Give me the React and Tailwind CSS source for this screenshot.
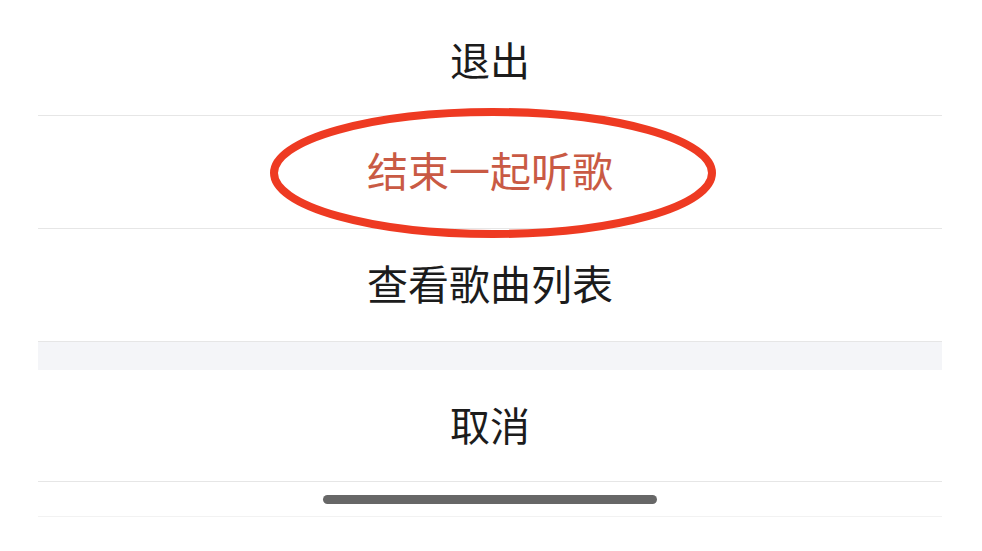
import React from "react";

const font = { fontFamily: '"Noto Sans CJK SC", "Noto Sans", sans-serif' };

function Row({ children, className = "" }) {
  return (
    <div className={`flex items-center justify-center h-[113px] pb-[6px] border-b border-[#e6e6e6] ${className}`}>
      {children}
    </div>
  );
}

export default function App() {
  return (
    <div className="w-[982px] h-[551px] bg-white overflow-hidden" style={font}>
      <div className="relative mx-[38px] w-[904px]">
        <div className="flex items-center justify-center h-[116px] pt-[2px] border-b border-[#e6e6e6]">
          <span className="text-[40px] leading-none text-[#1c1c1c]">退出</span>
        </div>
        <Row>
          <span className="text-[41px] leading-none text-[#c95a44]">结束一起听歌</span>
        </Row>
        <Row>
          <span className="text-[41px] leading-none text-[#1c1c1c]">查看歌曲列表</span>
        </Row>
        <div className="h-[28px] bg-[#f4f5f8]" />
        <div className="flex items-center justify-center h-[112px] pb-[4px] border-b border-[#e6e6e6]">
          <span className="text-[40px] leading-none text-[#1c1c1c]">取消</span>
        </div>
        <div className="flex items-center justify-center h-[35px] border-b border-[#f2f2f2]">
          <div className="w-[334px] h-[9px] rounded-full bg-[#676767]" />
        </div>
        <svg
          className="absolute left-[228px] top-[104px] pointer-events-none"
          width="460"
          height="140"
          viewBox="0 0 460 140"
        >
          <ellipse cx="227" cy="69" rx="219" ry="61" fill="none" stroke="#ee3a22" strokeWidth="8" />
        </svg>
      </div>
    </div>
  );
}
